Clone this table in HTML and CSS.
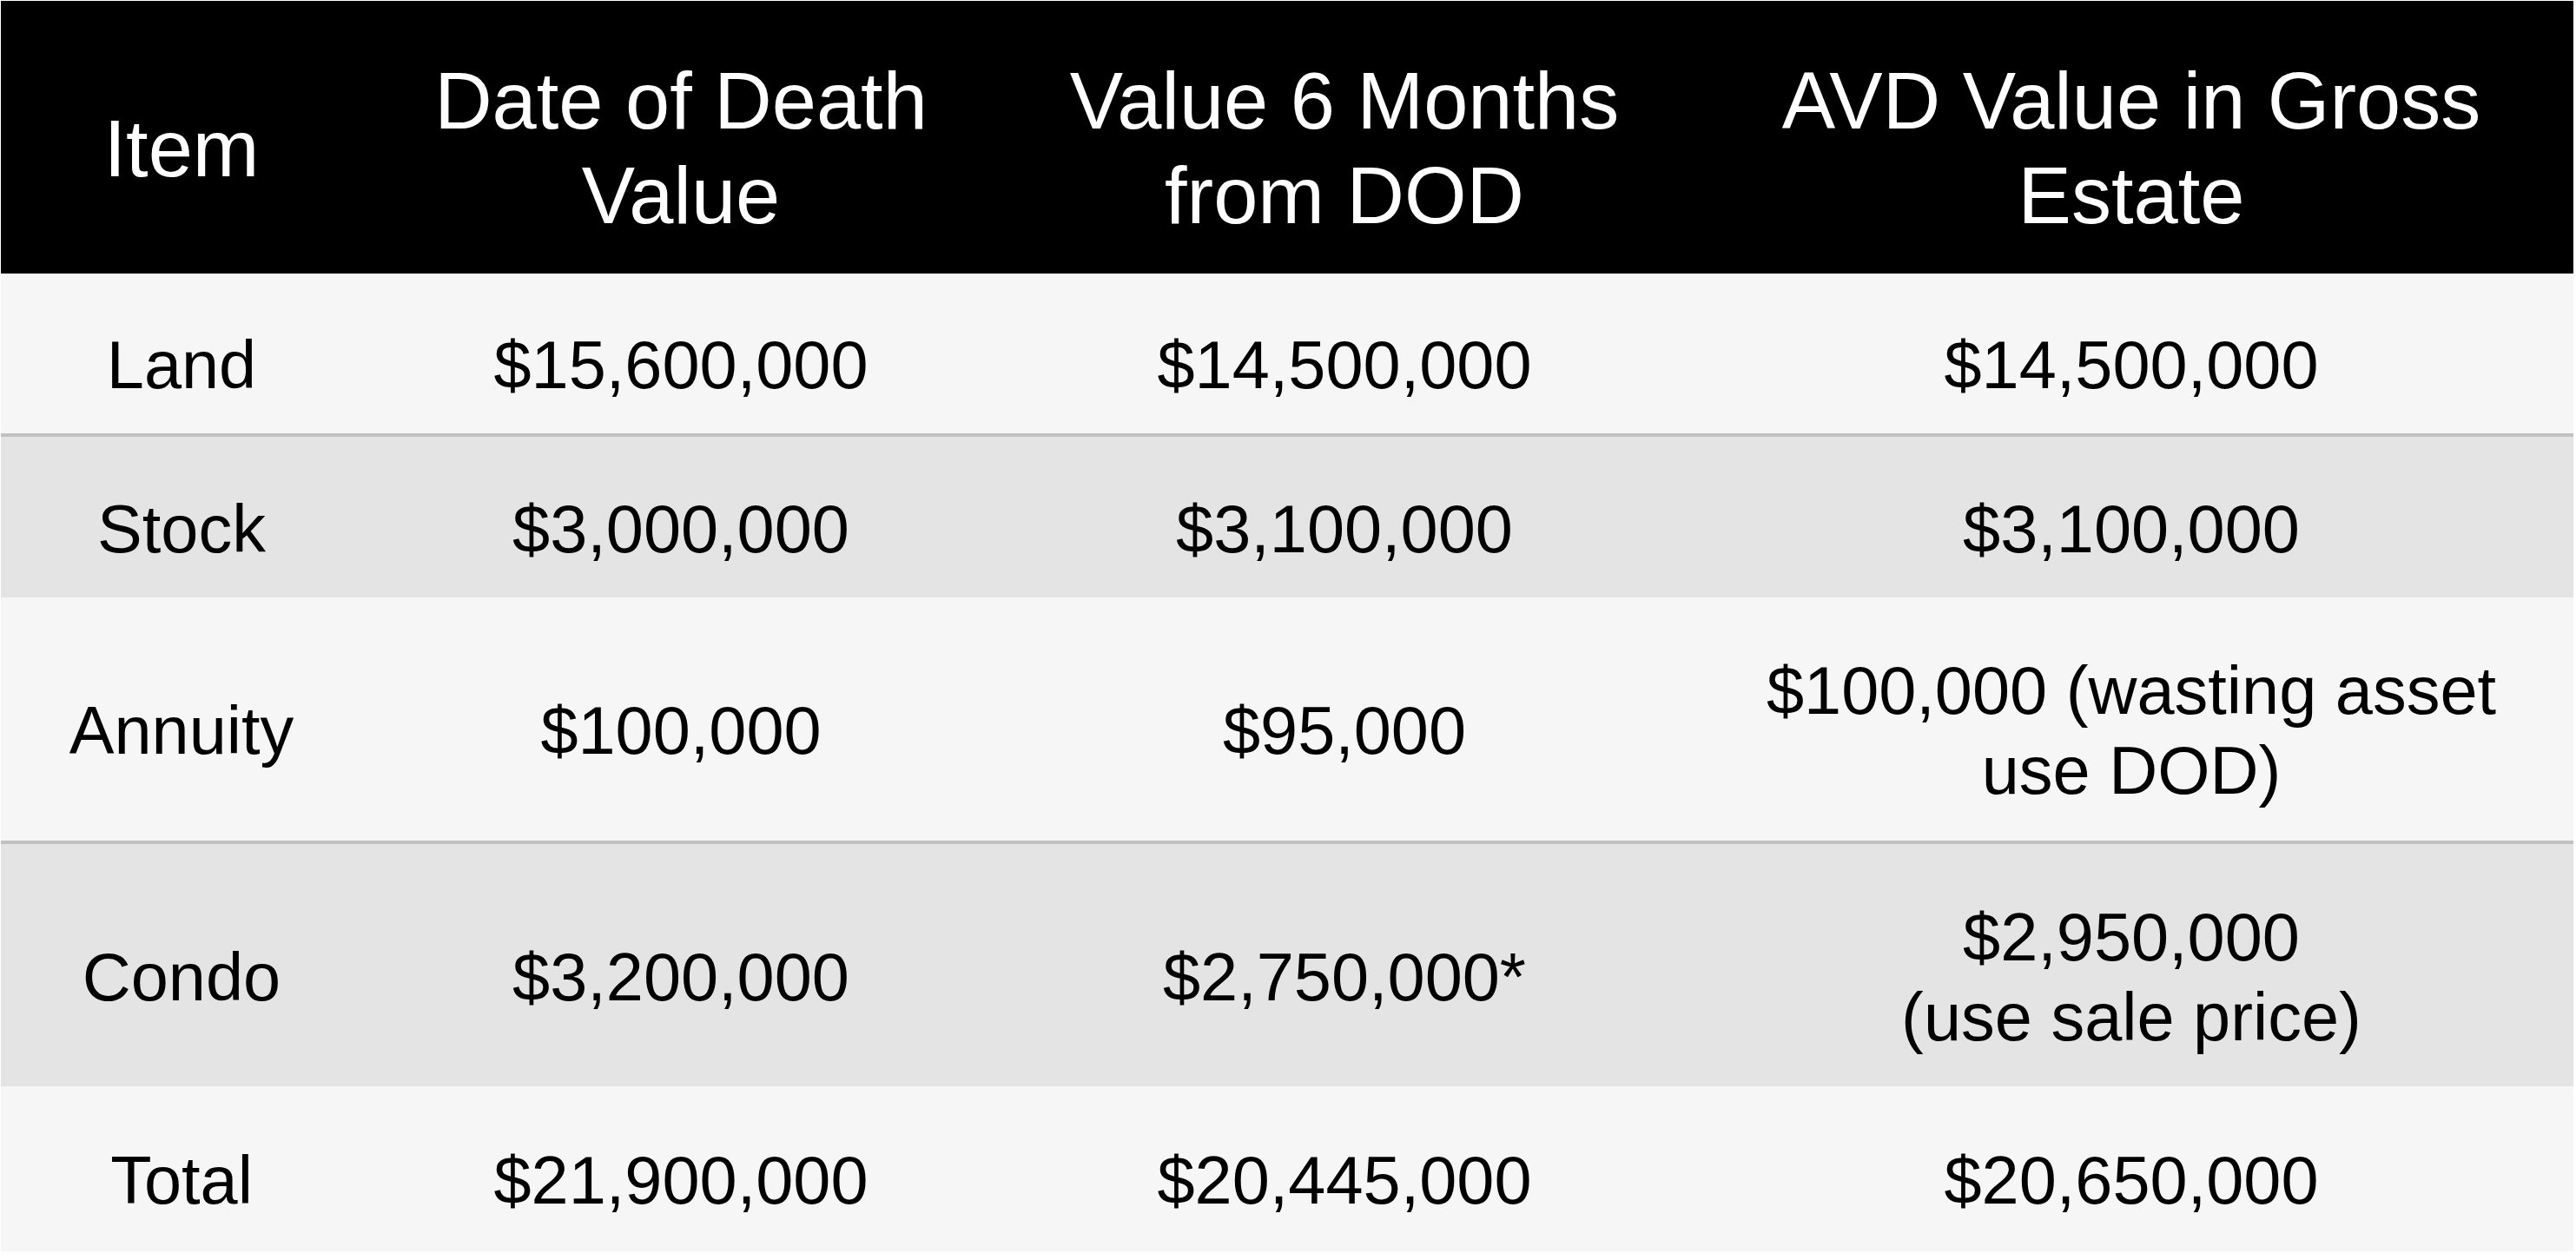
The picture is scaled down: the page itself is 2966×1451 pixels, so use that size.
FILE: index.html
```html
<!DOCTYPE html>
<html lang="en">
<head>
<meta charset="utf-8">
<title>Alternate Valuation Date</title>
<link rel="stylesheet" href="styles.css">
</head>
<body>
<div class="page">
  <table class="avd">
    <colgroup>
      <col class="c-item">
      <col class="c-dod">
      <col class="c-six">
      <col class="c-avd">
    </colgroup>
    <thead>
      <tr class="head">
        <th>Item</th>
        <th>Date of Death<br>Value</th>
        <th>Value 6 Months<br>from DOD</th>
        <th>AVD Value in Gross<br>Estate</th>
      </tr>
    </thead>
    <tbody>
      <tr class="light r-land lined">
        <td>Land</td>
        <td>$15,600,000</td>
        <td>$14,500,000</td>
        <td>$14,500,000</td>
      </tr>
      <tr class="dark r-stock">
        <td>Stock</td>
        <td>$3,000,000</td>
        <td>$3,100,000</td>
        <td>$3,100,000</td>
      </tr>
      <tr class="light r-annuity lined">
        <td>Annuity</td>
        <td>$100,000</td>
        <td>$95,000</td>
        <td>$100,000 (wasting asset<br>use DOD)</td>
      </tr>
      <tr class="dark r-condo">
        <td>Condo</td>
        <td>$3,200,000</td>
        <td>$2,750,000*</td>
        <td>$2,950,000<br>(use sale price)</td>
      </tr>
      <tr class="light r-total">
        <td>Total</td>
        <td>$21,900,000</td>
        <td>$20,445,000</td>
        <td>$20,650,000</td>
      </tr>
    </tbody>
  </table>
</div>
</body>
</html>
```

FILE: styles.css
```css
html, body {
  margin: 0;
  padding: 0;
  background: #ffffff;
}

.page {
  padding: 1px 0 0 1px;
}

.avd {
  width: 2962px;
  table-layout: fixed;
  border-collapse: separate;
  border-spacing: 0;
  font-family: "Liberation Sans", Arial, sans-serif;
  color: #000000;
}

.c-item { width: 416px; }
.c-dod  { width: 734px; }
.c-six  { width: 794px; }
.c-avd  { width: 1018px; }

.avd th,
.avd td {
  box-sizing: border-box;
  padding: 26px 6px 0 6px;
  text-align: center;
  vertical-align: middle;
}

.head th {
  background: #000000;
  color: #ffffff;
  font-weight: normal;
  font-size: 92px;
  line-height: 109px;
}

.avd td {
  font-size: 77.5px;
  line-height: 92px;
}

.light td { background: #f6f6f6; }
.dark td  { background: #e4e4e4; }

.lined td {
  border-bottom: 4px solid #c1c1c1;
}

.head     { height: 314px; }
.r-land   { height: 188px; }
.r-stock  { height: 185px; }
.r-annuity{ height: 284px; }
.r-condo  { height: 279px; }
.r-total  { height: 190px; }
```
